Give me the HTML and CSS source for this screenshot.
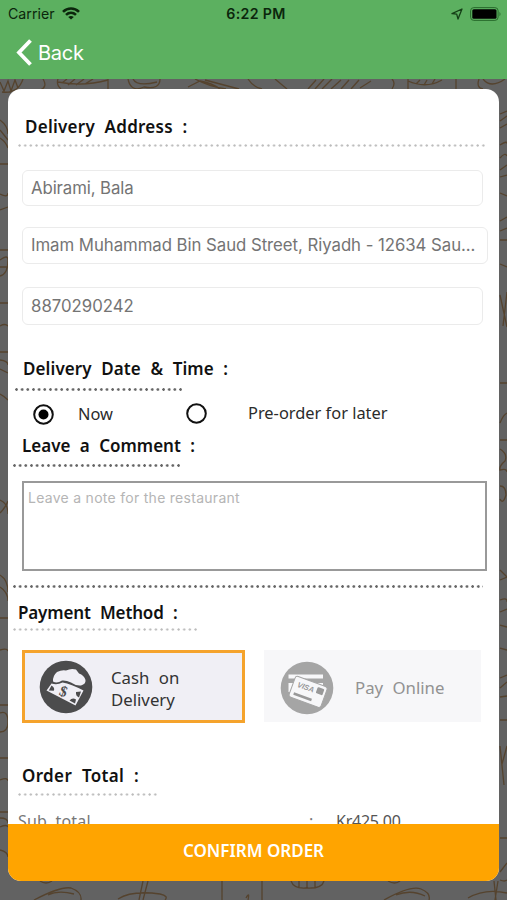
FILE: index.html
```html
<!DOCTYPE html>
<html lang="en">
<head>
<meta charset="utf-8">
<title>Checkout</title>
<link rel="stylesheet" href="styles.css">
</head>
<body>
<header class="topbar">
  <div class="status">
    <div class="status-left"><span class="carrier">Carrier</span>
      <svg class="wifi" width="18" height="13" viewBox="0 0 18 13" fill="none" stroke="#0b260c" stroke-width="2.6"><path d="M1 4.800C5.500.3 12.500.3 17 4.800M4 7.900C6.900 5.200 11.100 5.200 14 7.900"/><path d="M9 12.600L6.200 9.900Q9 7.900 11.800 9.900Z" fill="#0b260c" stroke="none"/></svg>
    </div>
    <span class="clock">6:22 PM</span>
    <div class="status-right">
      <svg width="12" height="12" viewBox="0 0 12 12" fill="none" stroke="#143f16" stroke-width="1.300" stroke-linejoin="round"><path d="M11 1L1 5.700L5.700 6.200L7 11Z"/></svg>
      <svg width="32" height="14" viewBox="0 0 32 14"><rect x=".6" y=".6" width="27.500" height="12.800" rx="3.200" fill="none" stroke="#286b2c" stroke-width="1"/><rect x="2.300" y="2.300" width="24.200" height="9.400" rx="1.500" fill="#000"/><path d="M29.500 4.700Q31.500 7 29.500 9.300Z" fill="#286b2c"/></svg>
    </div>
  </div>
  <div class="nav">
    <svg width="16" height="27" viewBox="0 0 16 27" fill="none" stroke="#fff" stroke-width="3.800"><path d="M14.500 1.500L3 13.500L14.500 25.500"/></svg>
    <span>Back</span>
  </div>
</header>
<main class="stage">
  <svg class="pattern" width="507" height="821" viewBox="0 79 507 821" fill="none" stroke="#55432e" stroke-width="1.300">
    <path d="M0 82l4 9l4-10l3 10l4-11l3 8M2 92Q18 94 23 79M43 79Q48 87 40 90M58 79q-2 6 3 10M58 82q25 5 50-2M62 83l5-4M68 85l7-6M76 85l8-6M85 84l8-5M108 79v10M128 79q3 14 16 8q16 3 16-8M133 79q4 8 24 3M188 87l12-6q12 2 20 8M195 79q15 8 31 10M205 80l34 9M248 79q5 8 14 10M275 79l12 10M308 89l8-9M315 89l9-10M322 89l10-10M331 89l10-9M341 89l8-9M351 89l8-9M360 88l11-7M392 79q4 4 0 10M408 79v10M408 81q18 8 34-1M416 84l4-4M424 85l3-5M432 84l3-5M456 79v10M479 79q-3 9 4 10M483 79q8 10 22 0"/>
    <path d="M0 120q8 6 8 14M0 130l8 10M0 138q6 4 8 10M0 164h8M0 194q8 4 8-1M0 210l8-3M0 250h8M0 260q8-6 8 0q0 14-8 16M0 267h8M0 303h8M0 326q5-3 8 0M0 352h8M0 360q8 1 8 5M0 369l8 4M0 394q4 2 8 6M0 500q8 3 8 14M0 513q6-6 8-12M0 575q8 5 8 17M0 587q8 5 8 14M0 618h8M0 650q7-2 8 1M0 705h8M0 713q8-3 8 9q0 10-8 10M0 758h8M0 780q8-3 8 1M0 812h8M0 818q8 0 8 5M0 827q7-3 8 0M0 850q8 2 8 7"/>
    <path d="M500 114l7-3M500 121l7-5M500 128l7-4M500 145q8-5 7-1M500 158q5-6 7-2M500 170l7-5M500 177l7-2M500 193l7 3M500 221l7-4M500 231l7-3M500 240h7M500 264l7 3M500 295l7 32M507 292l-4 34M500 383h7M500 423q3-8 7-10M500 440h7M500 449q8 5 5 12q-6 5-5 9q7-2 7 2M500 486q6 0 6 9q-3 10-6 4M500 570l7 7M500 580l7-3M500 600q8-3 7 2M500 612l7-3M500 625l7 2M500 648l7 2M500 678l7-3M500 688l7-6M500 697l7-1M500 720h7M500 746l4 39M507 746l-5 18M500 838h7M500 872l7-9M500 880q5 2 7 0"/>
    <path d="M34 900q27-14 37-12q11 4 10 12M48 895q10-5 26-1M40 881q6 4 12 0M148 881l-5 19M143 881l-4 19M118 899q14-9 42-5q9 2 5 6M222 881v19M246 898q4-7 2 2M262 881v19M291 881q3 8 15 7q16 1 18-7M299 881v7M307 881v7M315 881v7M384 900q27-15 37-11q10 4 8 11M396 895q15-6 29 1M388 881q7 4 12 0M494 881l2 19M498 881l-3 19M468 898q17-10 39-5"/>
  </svg>
  <section class="card">
    <div class="content">
      <h2 class="address-title">Delivery Address :</h2>
      <div class="dots light dots-address"></div>
      <div class="field name">Abirami, Bala</div>
      <div class="field street">Imam Muhammad Bin Saud Street, Riyadh - 12634 Sau...</div>
      <div class="field phone">8870290242</div>
      <h2 class="date-title">Delivery Date &amp; Time :</h2>
      <div class="dots dots-date"></div>
      <div class="options">
        <svg class="radio-on" width="21" height="21" viewBox="0 0 21 21"><circle cx="10.500" cy="10.500" r="9.300" fill="none" stroke="#111" stroke-width="2"/><circle cx="10.500" cy="10.500" r="5" fill="#000"/></svg>
        <span class="now">Now</span>
        <svg class="radio-off" width="21" height="21" viewBox="0 0 21 21"><circle cx="10.500" cy="10.500" r="9.300" fill="none" stroke="#111" stroke-width="2"/></svg>
        <span class="later">Pre-order for later</span>
      </div>
      <h2 class="comment-title">Leave a Comment :</h2>
      <div class="dots dots-comment"></div>
      <div class="note">Leave a note for the restaurant</div>
      <div class="dots dots-full"></div>
      <h2 class="payment-title">Payment Method :</h2>
      <div class="dots light dots-payment"></div>
      <div class="methods">
        <div class="method selected">
          <svg width="54" height="54" viewBox="0 0 54 54"><circle cx="27" cy="27" r="26.300" fill="#4c4c4d"/><path d="M14 21.500Q13.500 16 18 12Q23 9.500 27 10.500Q32 8 37 9.500L40 13.500Q45 15 46.500 20Q47 24 42 25.500Q37 26 32 22.500Q27 20 23 20.500Q18 24 14 21.500Z" fill="#f0eff5"/><path d="M12.500 23.500Q18 25.500 23.500 22.500Q32 24 44.500 30.500L36.500 45.500L7.500 30.500Z" fill="#f0eff5"/><path d="M12.500 25.500l-2.700 5l5 .3q1.500-3-2.300-5.300zM42 31.500l-5 .5q-.5 4 3 5.500zM36 43.500l-5.500-3q3-3.500 6.500-1z" fill="#4c4c4d"/><text x="21" y="36.500" class="dollar" transform="rotate(20 25 31)">$</text></svg>
          <span class="cash">Cash on<br>Delivery</span>
        </div>
        <div class="method online">
          <svg width="54" height="54" viewBox="0 0 54 54"><circle cx="27" cy="27" r="26.300" fill="#a5a5a5"/><path d="M8.500 13.500h34.500v4H8.500zM8.500 22h34.500v9H8.500z" fill="#f7f7f9"/><g transform="rotate(20 27 31)"><rect x="11" y="19.500" width="34" height="22" rx="2.500" fill="#f7f7f9" stroke="#a5a5a5"/><text x="15.500" y="29.500" class="visa">VISA</text><rect x="35.500" y="22.500" width="7" height="6.500" rx="1" fill="#999"/><path d="M15 37h19" stroke="#999" stroke-width="2.500"/></g></svg>
          <span>Pay Online</span>
        </div>
      </div>
      <h2 class="total-title">Order Total :</h2>
      <div class="dots light dots-total"></div>
      <div class="subtotal"><span class="sub-label">Sub total</span><span class="colon">:</span><span class="amount">Kr425.00</span></div>
    </div>
    <div class="confirm">CONFIRM ORDER</div>
  </section>
</main>
</body>
</html>
```
FILE: styles.css
```css
* { box-sizing: border-box; }
body {
  margin: 0;
  width: 507px;
  height: 900px;
  overflow: hidden;
  display: flex;
  flex-direction: column;
  font-family: "Noto Sans", sans-serif;
  color: #111;
}
svg { display: block; flex: none; }
.topbar { height: 79px; flex: none; background: #5cb060; }
.status {
  height: 27px;
  display: grid;
  grid-template-columns: 1fr auto 1fr;
  align-items: center;
  padding: 0 5px 0 8px;
  font: 14.2px/27px Inter, sans-serif;
  color: #0b260c;
}
.status-left, .status-right { display: flex; align-items: center; gap: 7px; }
.status-right { justify-content: flex-end; }
.clock { font-weight: 600; letter-spacing: .35px; padding-left: 2px; }
.nav {
  display: flex;
  align-items: center;
  gap: 6px;
  height: 50px;
  padding-left: 16px;
  color: #fff;
  font: 20px/50px Inter, sans-serif;
  letter-spacing: -.25px;
}
.nav span { padding-top: 1px; }
.stage { position: relative; height: 821px; padding: 10px 8px 19px; background: #626262; }
.pattern { position: absolute; left: 0; top: 0; }
.card {
  position: relative;
  width: 491px;
  height: 792px;
  border-radius: 13px;
  overflow: hidden;
  background: #fff;
  display: flex;
  flex-direction: column;
}
.content { height: 735px; flex: none; overflow: hidden; display: flow-root; }
h2 {
  margin: 0;
  height: 22px;
  font-size: 17px;
  line-height: 22px;
  font-weight: 600;
  word-spacing: 5px;
  white-space: nowrap;
}
.dots {
  height: 3px;
  background: radial-gradient(circle at 1.500px 1.500px, #666 1px, transparent 1.600px) 0 0 / 5.670px 3px repeat-x;
}
.dots.light { background-image: radial-gradient(circle at 1.500px 1.500px, #bbb .8px, transparent 1.500px); }
.address-title { margin: 27px 0 0 17px; letter-spacing: .25px; }
.dots-address { margin: 6px 0 0 10px; width: 468px; }
.field {
  margin-left: 14px;
  width: 461px;
  border: 1px solid #ebebeb;
  border-radius: 6px;
  padding-left: 8px;
  font-family: Inter, sans-serif;
  font-size: 16.8px;
  color: #747474;
  white-space: nowrap;
}
.name { margin-top: 23px; height: 36px; line-height: 35px; letter-spacing: -.1px; }
.street { margin-top: 21px; width: 466px; height: 37px; line-height: 34px; letter-spacing: -.05px; }
.phone { margin-top: 23px; height: 38px; line-height: 36px; }
.date-title { margin: 33px 0 0 15px; letter-spacing: .1px; }
.dots-date { margin: 8px 0 0 7px; width: 168px; }
.options { display: flex; height: 44px; padding: 12px 0 0 25px; font-size: 16.4px; line-height: 22px; color: #2b2b2b; }
.now { margin-left: 24px; width: 108px; }
.radio-on { margin-top: 1px; }
.later { margin-left: 41px; margin-top: -1px; white-space: nowrap; }
.comment-title { margin-left: 14px; }
.dots-comment { margin: 7px 0 0 5px; width: 169px; }
.note {
  margin: 14px 0 0 14px;
  width: 465px;
  height: 90px;
  border: 2px solid #999;
  padding-left: 4px;
  font: 14px/29px Inter, sans-serif;
  letter-spacing: .28px;
  color: #b5b5b5;
}
.dots-full { margin: 14px 0 0 5px; width: 470px; }
.payment-title { margin: 14px 0 0 10px; letter-spacing: -.15px; }
.dots-payment { margin: 4px 0 0 5px; width: 186px; }
.methods { display: flex; gap: 19px; margin: 19px 0 0 14px; }
.method { display: flex; align-items: center; height: 73px; font-size: 16.800px; line-height: 22px; word-spacing: 5px; }
.selected { width: 223px; border: 3px solid #f5a32c; background: #f0eff5; padding-left: 14px; gap: 18px; color: #333; }
.online { width: 217px; height: 72px; background: #f7f7f9; padding: 4px 0 0 16px; gap: 21px; color: #929292; }
.cash { padding-top: 4px; }
.dollar { font: bold 15px "Liberation Serif", serif; fill: #4c4c4d; }
.visa { font: italic bold 7.5px "Liberation Sans", sans-serif; fill: #999; word-spacing: 0; }
.total-title { margin: 42px 0 0 14px; letter-spacing: .35px; }
.dots-total { margin: 6px 0 0 10px; width: 139px; }
.subtotal { display: flex; margin: 14px 0 0 10px; font-size: 16px; line-height: 22px; color: #777; }
.sub-label { width: 291px; word-spacing: 4px; letter-spacing: .2px; }
.colon { width: 27px; }
.amount { color: #555; letter-spacing: -.25px; }
.confirm {
  height: 57px;
  background: #ffa400;
  color: #fff;
  font-size: 17px;
  font-weight: 600;
  line-height: 54px;
  text-align: center;
}
```
